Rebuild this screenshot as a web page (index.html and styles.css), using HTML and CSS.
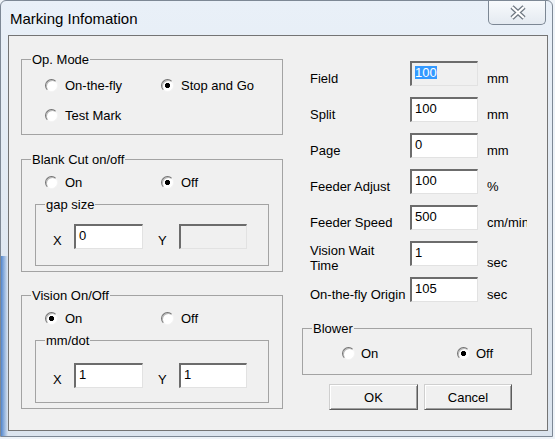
FILE: index.html
```html
<!DOCTYPE html>
<html>
<head>
<meta charset="utf-8">
<title>Marking Infomation</title>
<link rel="stylesheet" href="styles.css">
</head>
<body>
<div class="window">
  <div class="titlebar">
    <span class="title">Marking Infomation</span>
    <button class="close" aria-label="Close">
      <svg width="18" height="15" viewBox="0 0 18 15">
        <path d="M3 2 L15 13 M15 2 L3 13" stroke="#6f7882" stroke-width="4.6" fill="none"/>
        <path d="M3 2 L15 13 M15 2 L3 13" stroke="#ffffff" stroke-width="2.2" fill="none"/>
      </svg>
    </button>
  </div>
  <div class="client">
    <div class="col-left">
      <fieldset class="group op">
        <legend>Op. Mode</legend>
        <div class="radios radios-op">
          <label class="radio"><span class="dot"></span>On-the-fly</label>
          <label class="radio"><span class="dot on"></span>Stop and Go</label>
          <label class="radio"><span class="dot"></span>Test Mark</label>
        </div>
      </fieldset>
      <fieldset class="group blank">
        <legend>Blank Cut on/off</legend>
        <div class="radios radios-tight">
          <label class="radio"><span class="dot"></span>On</label>
          <label class="radio"><span class="dot on"></span>Off</label>
        </div>
        <fieldset class="group sub">
          <legend>gap size</legend>
          <div class="xy">
            <span class="axis">X</span>
            <span class="edit">0</span>
            <span class="axis axis-y">Y</span>
            <span class="edit disabled"></span>
          </div>
        </fieldset>
      </fieldset>
      <fieldset class="group vision">
        <legend>Vision On/Off</legend>
        <div class="radios radios-tight">
          <label class="radio"><span class="dot on"></span>On</label>
          <label class="radio"><span class="dot"></span>Off</label>
        </div>
        <fieldset class="group sub">
          <legend>mm/dot</legend>
          <div class="xy xy-mm">
            <span class="axis">X</span>
            <span class="edit">1</span>
            <span class="axis axis-y">Y</span>
            <span class="edit">1</span>
          </div>
        </fieldset>
      </fieldset>
    </div>
    <div class="col-right">
      <div class="fields">
        <div class="frow"><span class="lbl">Field</span><span class="edit readonly"><span class="sel">100</span></span><span class="unit">mm</span></div>
        <div class="frow"><span class="lbl">Split</span><span class="edit">100</span><span class="unit">mm</span></div>
        <div class="frow"><span class="lbl">Page</span><span class="edit">0</span><span class="unit">mm</span></div>
        <div class="frow"><span class="lbl">Feeder Adjust</span><span class="edit">100</span><span class="unit">%</span></div>
        <div class="frow"><span class="lbl">Feeder Speed</span><span class="edit">500</span><span class="unit unit-clip">cm/min</span></div>
        <div class="frow"><span class="lbl lbl-2">Vision Wait<br>Time</span><span class="edit">1</span><span class="unit unit-low">sec</span></div>
        <div class="frow"><span class="lbl">On-the-fly Origin</span><span class="edit">105</span><span class="unit">sec</span></div>
      </div>
      <fieldset class="group blower">
        <legend>Blower</legend>
        <div class="radios radios-blower">
          <label class="radio"><span class="dot"></span>On</label>
          <label class="radio"><span class="dot on"></span>Off</label>
        </div>
      </fieldset>
      <div class="buttons">
        <button class="btn btn-ok">OK</button>
        <button class="btn btn-cancel">Cancel</button>
      </div>
    </div>
  </div>
</div>
</body>
</html>
```
FILE: styles.css
```css
* { box-sizing: border-box; }
html, body { margin: 0; padding: 0; }
body {
  width: 555px;
  height: 439px;
  overflow: hidden;
  background: #eef3f8;
  font-family: "Liberation Sans", Arial, sans-serif;
  font-size: 13px;
  color: #000;
}
.window {
  width: 553px;
  height: 437px;
  border: 1px solid #7d8895;
  border-radius: 6px 6px 0 0;
  display: flex;
  flex-direction: column;
  background:
    linear-gradient(to right, rgba(58, 118, 200, 0.85), rgba(58, 118, 200, 0) 7px) 0 255px / 8px 182px no-repeat,
    linear-gradient(to bottom, #e9f0f8, #e1e9f2 50%, #dbe4ee);
}
.titlebar {
  height: 34px;
  display: flex;
  align-items: flex-start;
}
.title {
  font-size: 15px;
  line-height: 17px;
  padding: 9px 0 0 9px;
}
.close {
  margin-left: auto;
  margin-right: 6px;
  width: 58px;
  height: 24px;
  padding: 0;
  border: 1px solid #7c8794;
  border-top: 0;
  border-radius: 0 0 5px 5px;
  background: linear-gradient(#f8fafc, #e4eaf1);
  display: flex;
  align-items: center;
  justify-content: center;
}
.close svg { display: block; margin-left: 2px; }
.client {
  flex: 1;
  margin: 0 4px 5px 7px;
  border: 1px solid #747474;
  background: #f0f0f0;
  display: grid;
  grid-template-columns: 262px 230px;
  column-gap: 19px;
  align-items: start;
  padding: 16px 0 0 12px;
}
.group {
  margin: 0;
  padding: 0;
  min-width: 0;
  border: 1px solid #a3a3a3;
}
.group > legend {
  margin-left: 9px;
  padding: 0 1px;
  line-height: 15px;
}
.op { margin-bottom: 17px; }
.blank { margin-bottom: 16px; }
.radios {
  display: grid;
  grid-template-columns: 116px auto;
  padding: 1px 0 0 23px;
}
.radio {
  display: flex;
  align-items: center;
  gap: 7px;
  height: 29px;
  line-height: 15px;
  white-space: nowrap;
}
.radios-op { padding: 3px 0 4px 23px; }
.radios-op .radio { height: 30px; }
.radios-blower {
  grid-template-columns: 115px auto;
  padding: 3px 0 6px 39px;
}
.radios-blower .radio { gap: 6px; }
.dot {
  flex: none;
  width: 13px;
  height: 13px;
  border-radius: 50%;
  border: 1px solid;
  border-color: #727272 #f4f4f4 #f4f4f4 #727272;
  background: #fff;
  box-shadow: inset 1px 1px 0 #b9b9b9;
}
.dot.on {
  background: radial-gradient(circle, #000 0, #000 2.3px, #fff 2.9px);
}
.sub { margin: 0 13px 5px 13px; }
.xy {
  display: flex;
  align-items: flex-end;
  padding: 12px 0 16px 17px;
}
.xy-mm { padding: 15px 0 14px 17px; }
.axis {
  width: 21px;
  line-height: 15px;
  padding-bottom: 1px;
}
.axis-y { margin-left: 15px; }
.edit {
  display: block;
  height: 25px;
  width: 69px;
  border-style: solid;
  border-width: 2px 1px 1px 2px;
  border-color: #6c6c6c #e2e2e2 #e2e2e2 #6c6c6c;
  background: #fff;
  padding: 2px 3px;
  line-height: 15px;
  white-space: nowrap;
}
.xy .edit + .axis + .edit { width: 68px; }
.edit.disabled, .edit.readonly { background: #f0f0f0; }
.sel {
  background: #3399ff;
  color: #fff;
  display: inline-block;
  line-height: 13px;
  margin-top: 1px;
}
.fields {
  display: flex;
  flex-direction: column;
  gap: 11px;
  padding: 9px 0 0 8px;
}
.frow {
  display: flex;
  height: 25px;
}
.frow .lbl {
  width: 100px;
  align-self: flex-end;
  line-height: 15px;
  white-space: nowrap;
}
.frow .edit { width: 68px; }
.frow .unit {
  margin-left: 9px;
  align-self: flex-end;
  line-height: 15px;
  white-space: nowrap;
}
.frow .lbl-2 {
  align-self: flex-start;
  margin-top: 2px;
}
.frow .unit-low {
  align-self: flex-start;
  margin-top: 14px;
}
.frow .unit-clip {
  width: 40px;
  overflow: hidden;
}
.blower { margin-top: 19px; }
.buttons {
  display: flex;
  gap: 6px;
  padding-left: 27px;
  margin-top: 9px;
}
.btn {
  height: 26px;
  padding: 0;
  font: inherit;
  color: #000;
  background: #f0f0f0;
  border: 1px solid;
  border-color: #cfcfcf #5c5c5c #5c5c5c #cfcfcf;
  box-shadow: inset 1px 1px 0 #ffffff, inset -1px -1px 0 #a0a0a0;
}
.btn-ok { width: 89px; }
.btn-cancel { width: 88px; }
```
